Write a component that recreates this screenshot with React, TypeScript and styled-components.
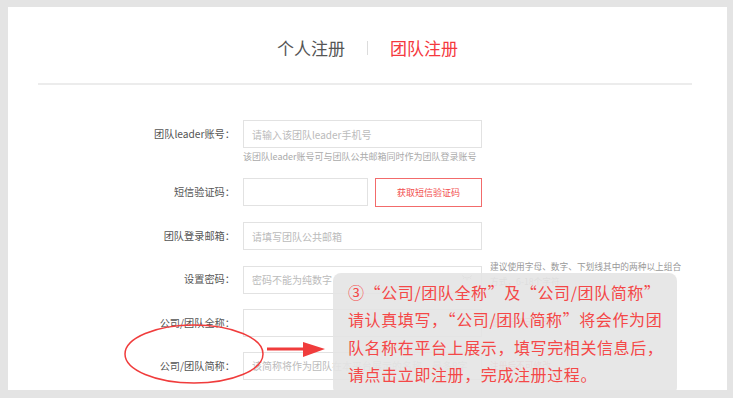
import React from 'react';
import styled, { createGlobalStyle } from 'styled-components';

const GlobalStyle = createGlobalStyle`
  html, body {
    margin: 0;
    padding: 0;
    background: #e4e4e4;
  }
  body {
    padding: 7px 0 0 8px;
    font-family: "Noto Sans CJK SC", "Noto Sans", sans-serif;
  }
`;

const Panel = styled.div`
  position: relative;
  width: 719px;
  height: 383px;
  background: #fff;
  overflow: hidden;
`;

const TabBar = styled.div`
  display: flex;
  justify-content: center;
  align-items: center;
  gap: 22px;
  padding: 29px 0 23px 0;
  height: 24px;
`;

const Tab = styled.div<{ $active?: boolean }>`
  font-size: 17px;
  line-height: 24px;
  color: ${(p) => (p.$active ? '#f5383e' : '#555')};
`;

const TabSep = styled.div`
  width: 1px;
  height: 14px;
  background: #dcdcdc;
`;

const Divider = styled.div`
  height: 2px;
  background: #ececec;
  margin: 0 35px 0 30px;
`;

const Form = styled.div`
  display: flex;
  flex-direction: column;
  gap: 15px;
  margin-top: 35px;
`;

const Row = styled.div`
  display: flex;
  align-items: flex-start;
`;

const Label = styled.div`
  width: 227px;
  margin-right: 8px;
  height: 28px;
  line-height: 28px;
  text-align: right;
  font-size: 10.2px;
  color: #555;
  white-space: nowrap;
`;

const Field = styled.div`
  display: flex;
  flex-direction: column;
`;

const InputWrap = styled.div`
  position: relative;
`;

const Input = styled.input<{ $w?: number }>`
  box-sizing: border-box;
  width: ${(p) => p.$w ?? 239}px;
  height: 28px;
  border: 1px solid #e2e2e2;
  padding: 0 8px;
  font-family: inherit;
  font-size: 10px;
  outline: none;
  color: #333;
  &::placeholder {
    color: #bbb;
  }
`;

const Hint = styled.div`
  margin-top: 3px;
  line-height: 12px;
  font-size: 9px;
  color: #aaa;
  white-space: nowrap;
`;

const CodeGroup = styled.div`
  display: flex;
  gap: 7px;
`;

const CodeButton = styled.button`
  box-sizing: border-box;
  width: 107px;
  height: 29px;
  background: #fff;
  border: 1px solid #f26b6b;
  color: #f24d4d;
  font-family: inherit;
  font-size: 9px;
  cursor: pointer;
`;

const EyeIcon = styled.svg`
  position: absolute;
  right: 9px;
  top: 9px;
`;

const SideNote = styled.div<{ $red?: boolean; $shift?: number }>`
  margin-left: 8px;
  margin-top: ${(p) => p.$shift ?? 0}px;
  font-size: 8.7px;
  line-height: 15px;
  color: ${(p) => (p.$red ? '#f07b7b' : '#999')};
  width: 192px;
`;

const Callout = styled.div`
  position: absolute;
  left: 325px;
  top: 266px;
  width: 344px;
  height: 122px;
  box-sizing: border-box;
  padding: 6px 8px 0 15px;
  border-radius: 8px;
  background: rgba(228, 228, 228, 0.9);
  color: #f44848;
  font-size: 16px;
  line-height: 27.3px;
  letter-spacing: 0.6px;
  white-space: nowrap;
`;

const Marks = styled.svg`
  position: absolute;
  left: 0;
  top: 0;
  pointer-events: none;
`;

export default function App() {
  return (
    <>
      <GlobalStyle />
      <Panel>
        <TabBar>
          <Tab>个人注册</Tab>
          <TabSep />
          <Tab $active>团队注册</Tab>
        </TabBar>
        <Divider />
        <Form>
          <Row>
            <Label>团队leader账号：</Label>
            <Field>
              <Input placeholder="请输入该团队leader手机号" />
              <Hint>该团队leader账号可与团队公共邮箱同时作为团队登录账号</Hint>
            </Field>
          </Row>
          <Row>
            <Label>短信验证码：</Label>
            <CodeGroup>
              <Input $w={125} />
              <CodeButton>获取短信验证码</CodeButton>
            </CodeGroup>
          </Row>
          <Row>
            <Label>团队登录邮箱：</Label>
            <Input placeholder="请填写团队公共邮箱" />
          </Row>
          <Row>
            <Label>设置密码：</Label>
            <InputWrap>
              <Input type="password" placeholder="密码不能为纯数字" />
              <EyeIcon width="12" height="8" viewBox="0 0 12 8">
                <path d="M1 1.5 Q6 6.5 11 1.5" fill="none" stroke="#bbb" strokeWidth="1" />
                <path d="M3 3.6 L2 5.2 M6 4.6 L6 6.4 M9 3.6 L10 5.2" stroke="#bbb" strokeWidth="1" />
              </EyeIcon>
            </InputWrap>
            <SideNote $shift={-6}>建议使用字母、数字、下划线其中的两种以上组合方式，6-18个字符</SideNote>
          </Row>
          <Row>
            <Label>公司/团队全称：</Label>
            <Input />
            <SideNote $red $shift={6}>提交后不可修改</SideNote>
          </Row>
          <Row>
            <Label>公司/团队简称：</Label>
            <Input placeholder="该简称将作为团队在本平台展示的名称，最多8字" />
            <SideNote $red $shift={6}>注册后不可修改</SideNote>
          </Row>
        </Form>
        <Callout>
          ③“公司/团队全称”及“公司/团队简称”
          <br />
          请认真填写，“公司/团队简称”将会作为团
          <br />
          队名称在平台上展示，填写完相关信息后，
          <br />
          请点击立即注册，完成注册过程。
        </Callout>
        <Marks width="719" height="383" viewBox="0 0 719 383">
          <ellipse cx="186" cy="347" rx="69" ry="29" fill="none" stroke="#f03c3c" strokeWidth="1.5" />
          <line x1="259" y1="342" x2="297" y2="342" stroke="#f03c3c" strokeWidth="3" />
          <polygon points="295,335 317,342 295,350" fill="#f03c3c" />
        </Marks>
      </Panel>
    </>
  );
}
